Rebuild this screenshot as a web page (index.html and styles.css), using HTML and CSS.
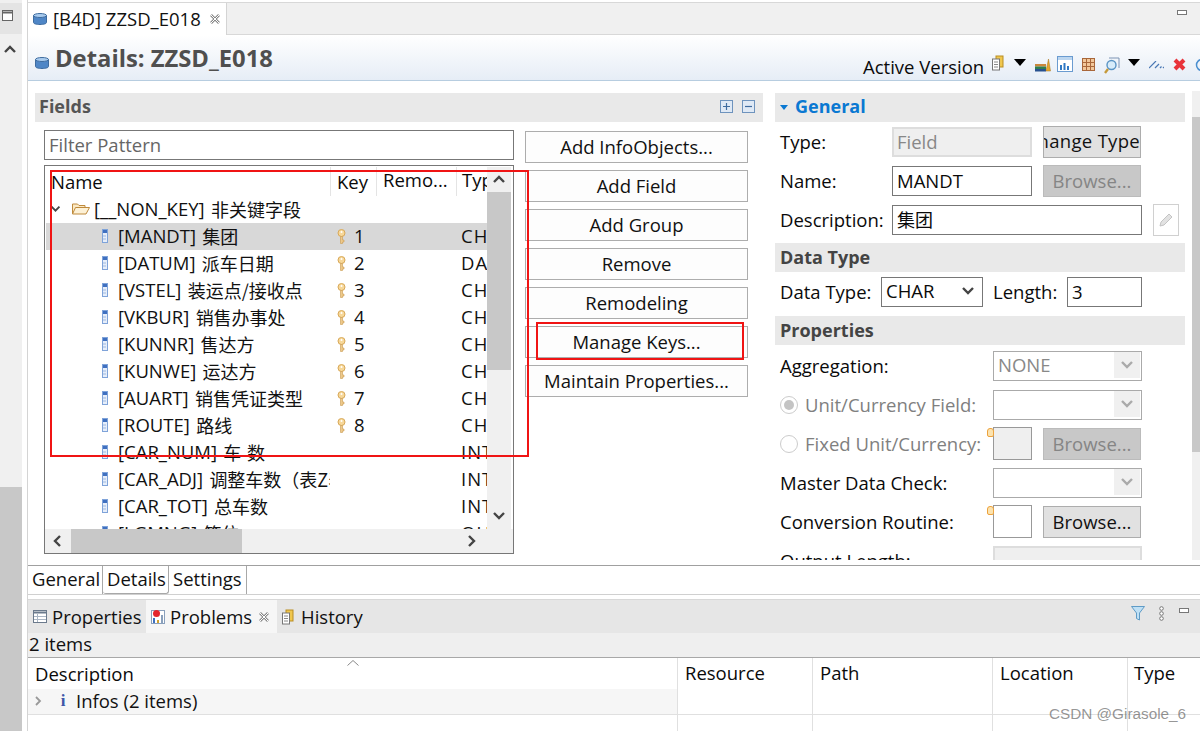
FILE: index.html
```html
<!DOCTYPE html>
<html lang="zh">
<head>
<meta charset="utf-8">
<title>ZZSD_E018</title>
<link rel="stylesheet" href="styles.css">
</head>
<body>
<svg class="defs" width="0" height="0">
  <symbol id="db" viewBox="0 0 14 12"><path d="M.5 2.5v7c0 1.2 2.8 2 6.5 2s6.500-.8 6.500-2v-7z" fill="#4f86c6" stroke="#3f6c9f"/><ellipse cx="7" cy="2.500" rx="6.500" ry="2" fill="#a9cbee" stroke="#3f6c9f"/></symbol>
  <symbol id="field" viewBox="0 0 6 14"><rect x=".5" y=".5" width="5" height="13" fill="#e6eefa" stroke="#7fa3d9"/><path d="M1 1h4v3H1z" fill="#3f70c0"/><path d="M1 7h3M1 10h3" stroke="#9db8e0"/></symbol>
  <symbol id="key" viewBox="0 0 9 15"><circle cx="4.500" cy="4" r="3.500" fill="#f7d89a" stroke="#d8a858"/><circle cx="4.500" cy="3" r="1" fill="#fff"/><path d="M3.500 7.500v7h2v-1.500h1.500v-2H5.500V7.500z" fill="#eec98a" stroke="#c99a50" stroke-width=".6"/></symbol>
  <symbol id="chev" viewBox="0 0 14 10"><path d="M2 2l5 5 5-5" fill="none" stroke="currentColor" stroke-width="2.400"/></symbol>
  <symbol id="hist" viewBox="0 0 12 16"><rect x="4" y="1" width="7" height="11" fill="#f0c74e" stroke="#b98d22"/><rect x=".5" y="4" width="7" height="11" fill="#fff" stroke="#777"/><path d="M2 7h4M2 9.500h4M2 12h4" stroke="#888"/></symbol>
  <symbol id="close" viewBox="0 0 10 10"><path d="M1 1l8 8M9 1L1 9" stroke="#888" stroke-width="2.600"/><path d="M1 1l8 8M9 1L1 9" stroke="#fff" stroke-width="1"/></symbol>
  <symbol id="min" viewBox="0 0 10 5"><rect x=".5" y=".5" width="9" height="4" fill="#fff" stroke="#777"/></symbol>
</svg>

<div class="page">
  <aside class="leftbar">
    <div class="lb-top"><svg class="lb-win" width="11" height="11" viewBox="0 0 11 11"><rect x=".5" y=".5" width="10" height="10" fill="#fff" stroke="#666"/><path d="M1 2.500h9" stroke="#666" stroke-width="2"/></svg></div>
    <div class="lb-mid"><svg class="lb-up" width="14" height="10"><use href="#chev" transform="matrix(1 0 0 -1 0 9)"/></svg></div>
    <div class="lb-thumb"></div>
  </aside>

  <main class="main">
    <div class="editor-tabs">
      <div class="editor-tab"><svg class="i-db" width="14" height="12"><use href="#db"/></svg><span>[B4D] ZZSD_E018</span><svg class="i-close" width="10" height="10"><use href="#close"/></svg></div>
      <svg class="i-min top-min" width="10" height="5"><use href="#min"/></svg>
    </div>

    <header class="head">
      <div class="head-title"><svg class="i-db2" width="14" height="12"><use href="#db"/></svg><h1>Details: ZZSD_E018</h1></div>
      <div class="head-tools">
        <span class="version">Active Version</span>
        <svg class="t t1" width="12" height="16"><use href="#hist"/></svg>
        <span class="drop"></span>
        <svg class="t t2" width="16" height="14" viewBox="0 0 16 14"><path d="M0 6h11v2.500H0z" fill="#c9863a"/><path d="M0 8.500h11V11H0z" fill="#2e7d4f"/><path d="M0 11h11v2.500H0z" fill="#27508f"/><path d="M11 13l2.500-12 2 12z" fill="#e5a52c" stroke="#a5741c" stroke-width=".5"/></svg>
        <svg class="t t3" width="16" height="16" viewBox="0 0 16 16"><rect x=".5" y=".5" width="15" height="15" fill="#fff" stroke="#6a9bd0"/><path d="M1 1h14v3H1z" fill="#bcd6f0"/><path d="M3 14V9h2v5zM6.500 14V7h2v7zM10 14v-4h2v4z" fill="#2f78c4"/></svg>
        <svg class="t t4" width="13" height="13" viewBox="0 0 13 13"><rect x=".5" y=".5" width="12" height="12" fill="#f2c79a" stroke="#a9673a"/><path d="M.5 4.500h12M.5 8.500h12M4.500.5v12M8.500.5v12" stroke="#a9673a"/></svg>
        <svg class="t t5" width="16" height="17" viewBox="0 0 16 17"><path d="M5 1h10v10" fill="none" stroke="#7c94b4"/><circle cx="7.500" cy="8" r="4.500" fill="#d7ecfa" stroke="#5a94c4" stroke-width="1.400"/><path d="M4 12l-3 4" stroke="#c59a3a" stroke-width="2.400"/></svg>
        <span class="drop d2"></span>
        <svg class="t t6" width="15" height="8" viewBox="0 0 15 8"><path d="M0 7l7-7M6 7l4-4M11 7l1.500-1.500M14 7l1-1" stroke="#4a78b4" stroke-width="1.200"/></svg>
        <svg class="t t7" width="13" height="13" viewBox="0 0 13 13"><path d="M2 2l9 9M11 2l-9 9" stroke="#e8333a" stroke-width="4"/></svg>
        <svg class="t t8" width="14" height="14" viewBox="0 0 14 14"><circle cx="7" cy="7" r="5.500" fill="none" stroke="#4a8fd0" stroke-width="1.500"/></svg>
      </div>
    </header>

    <div class="content">
      <section class="fields">
        <div class="sec-head fields-head">
          <span>Fields</span>
          <span class="sec-tools">
            <svg width="13" height="13" viewBox="0 0 13 13"><rect x=".5" y=".5" width="12" height="12" fill="#dfe9f5" stroke="#6e93bd"/><path d="M3 6.500h7M6.500 3v7" stroke="#3f6c9f" stroke-width="1.200"/></svg>
            <svg width="13" height="13" viewBox="0 0 13 13"><rect x=".5" y=".5" width="12" height="12" fill="#dfe9f5" stroke="#6e93bd"/><path d="M3 6.500h7" stroke="#3f6c9f" stroke-width="1.200"/></svg>
          </span>
        </div>
        <div class="fields-body">
          <div class="tree-col">
            <div class="filter">Filter Pattern</div>
            <div class="tree">
              <div class="tree-top">
                <div class="list">
                  <div class="list-head"><span class="c1">Name</span><span class="c2">Key</span><span class="c3">Remo...</span><span class="c4">Typ</span></div>
                  <div class="tr folder"><span class="c1"><svg class="twist" width="11" height="8"><use href="#chev"/></svg><svg class="i-folder" width="18" height="13" viewBox="0 0 18 13"><path d="M.5 12V2h5l1.500 1.500h6V6" fill="#fbe9c4" stroke="#bf8a3c"/><path d="M.5 12l3-6.500h14L14 12z" fill="#fdf1d6" stroke="#bf8a3c"/></svg>[__NON_KEY] <span class="zh">非关键字段</span></span></div>
                  <div class="tr selrow"><span class="c1"><svg class="i-f" width="6" height="14"><use href="#field"/></svg>[MANDT] <span class="zh">集团</span></span><span class="c2"><svg class="i-k" width="9" height="15"><use href="#key"/></svg>1</span><span class="c3"></span><span class="c4">CHAR</span></div>
                  <div class="tr"><span class="c1"><svg class="i-f" width="6" height="14"><use href="#field"/></svg>[DATUM] <span class="zh">派车日期</span></span><span class="c2"><svg class="i-k" width="9" height="15"><use href="#key"/></svg>2</span><span class="c3"></span><span class="c4">DATS</span></div>
                  <div class="tr"><span class="c1"><svg class="i-f" width="6" height="14"><use href="#field"/></svg>[VSTEL] <span class="zh">装运点/接收点</span></span><span class="c2"><svg class="i-k" width="9" height="15"><use href="#key"/></svg>3</span><span class="c3"></span><span class="c4">CHAR</span></div>
                  <div class="tr"><span class="c1"><svg class="i-f" width="6" height="14"><use href="#field"/></svg>[VKBUR] <span class="zh">销售办事处</span></span><span class="c2"><svg class="i-k" width="9" height="15"><use href="#key"/></svg>4</span><span class="c3"></span><span class="c4">CHAR</span></div>
                  <div class="tr"><span class="c1"><svg class="i-f" width="6" height="14"><use href="#field"/></svg>[KUNNR] <span class="zh">售达方</span></span><span class="c2"><svg class="i-k" width="9" height="15"><use href="#key"/></svg>5</span><span class="c3"></span><span class="c4">CHAR</span></div>
                  <div class="tr"><span class="c1"><svg class="i-f" width="6" height="14"><use href="#field"/></svg>[KUNWE] <span class="zh">运达方</span></span><span class="c2"><svg class="i-k" width="9" height="15"><use href="#key"/></svg>6</span><span class="c3"></span><span class="c4">CHAR</span></div>
                  <div class="tr"><span class="c1"><svg class="i-f" width="6" height="14"><use href="#field"/></svg>[AUART] <span class="zh">销售凭证类型</span></span><span class="c2"><svg class="i-k" width="9" height="15"><use href="#key"/></svg>7</span><span class="c3"></span><span class="c4">CHAR</span></div>
                  <div class="tr"><span class="c1"><svg class="i-f" width="6" height="14"><use href="#field"/></svg>[ROUTE] <span class="zh">路线</span></span><span class="c2"><svg class="i-k" width="9" height="15"><use href="#key"/></svg>8</span><span class="c3"></span><span class="c4">CHAR</span></div>
                  <div class="tr"><span class="c1"><svg class="i-f" width="6" height="14"><use href="#field"/></svg>[CAR_NUM] <span class="zh">车 数</span></span><span class="c2"></span><span class="c3"></span><span class="c4">INT4</span></div>
                  <div class="tr"><span class="c1"><svg class="i-f" width="6" height="14"><use href="#field"/></svg>[CAR_ADJ] <span class="zh">调整车数（表Z表）</span></span><span class="c2"></span><span class="c3"></span><span class="c4">INT4</span></div>
                  <div class="tr"><span class="c1"><svg class="i-f" width="6" height="14"><use href="#field"/></svg>[CAR_TOT] <span class="zh">总车数</span></span><span class="c2"></span><span class="c3"></span><span class="c4">INT4</span></div>
                  <div class="tr"><span class="c1"><svg class="i-f" width="6" height="14"><use href="#field"/></svg>[LGMNG] <span class="zh">箱位</span></span><span class="c2"></span><span class="c3"></span><span class="c4">QUAN</span></div>
                </div>
                <div class="vscroll">
                  <div class="vs-up"><svg width="14" height="10"><use href="#chev" transform="matrix(1 0 0 -1 0 9)"/></svg></div>
                  <div class="vs-thumb"></div>
                  <div class="vs-rest"><svg width="14" height="10"><use href="#chev"/></svg></div>
                </div>
              </div>
              <div class="hscroll">
                <svg class="hs-l" width="10" height="14" viewBox="0 0 10 14"><path d="M8 2L3 7l5 5" fill="none" stroke="#444" stroke-width="2.400"/></svg>
                <div class="hs-thumb"></div>
                <svg class="hs-r" width="10" height="14" viewBox="0 0 10 14"><path d="M2 2l5 5-5 5" fill="none" stroke="#444" stroke-width="2.400"/></svg>
              </div>
            </div>
          </div>
          <div class="btn-col">
            <div class="btn">Add InfoObjects...</div>
            <div class="btn">Add Field</div>
            <div class="btn">Add Group</div>
            <div class="btn">Remove</div>
            <div class="btn">Remodeling</div>
            <div class="btn">Manage Keys...</div>
            <div class="btn">Maintain Properties...</div>
          </div>
        </div>
      </section>

      <section class="general">
        <div class="sec-head gen-head"><span class="tri"></span>General</div>
        <div class="row"><label class="l1">Type:</label><div class="inp w140 dis">Field</div><div class="pbtn clip"><span>Change Type</span></div></div>
        <div class="row"><label class="l1">Name:</label><div class="inp w140">MANDT</div><div class="pbtn off">Browse...</div></div>
        <div class="row"><label class="l1">Description:</label><div class="inp w250 zh">集团</div><div class="pencil"><svg width="16" height="16" viewBox="0 0 16 16"><path d="M2 14l1-4 8-8 3 3-8 8z" fill="#e2e2e2" stroke="#c4c4c4"/></svg></div></div>

        <div class="sec-head sub">Data Type</div>
        <div class="row"><label class="l0">Data Type:</label><div class="sel w102 on">CHAR<i><svg width="14" height="10"><use href="#chev"/></svg></i></div><label class="l2">Length:</label><div class="inp w75">3</div></div>

        <div class="sec-head sub sub2">Properties</div>
        <div class="row"><label class="l3">Aggregation:</label><div class="sel w149 gray">NONE<i><svg width="14" height="10"><use href="#chev"/></svg></i></div></div>
        <div class="row"><span class="radio on"></span><label class="l4 mute">Unit/Currency Field:</label><div class="sel w149"><i><svg width="14" height="10"><use href="#chev"/></svg></i></div></div>
        <div class="row"><span class="radio"></span><label class="l4 mute">Fixed Unit/Currency:</label><div class="inp w39 dis2 bulb"></div><div class="pbtn off">Browse...</div></div>
        <div class="row"><label class="l3">Master Data Check:</label><div class="sel w149"><i><svg width="14" height="10"><use href="#chev"/></svg></i></div></div>
        <div class="row"><label class="l3">Conversion Routine:</label><div class="inp w39 tall bulb"></div><div class="pbtn">Browse...</div></div>
        <div class="row"><label class="l3">Output Length:</label><div class="inp w149 dis out"></div></div>
      </section>

      <div class="side-scroll"><div class="ss-up"></div><div class="ss-thumb"></div><div class="ss-rest"></div></div>
    </div>

    <nav class="page-tabs">
      <span class="ptab">General</span><span class="ptab act">Details</span><span class="ptab">Settings</span>
    </nav>

    <section class="bottom">
      <div class="view-tabs">
        <div class="vtab"><svg width="14" height="13" viewBox="0 0 14 13"><rect x=".5" y=".5" width="13" height="12" fill="#fff" stroke="#6b7a8c"/><path d="M1 2.500h12" stroke="#6b7a8c" stroke-width="2"/><path d="M1 6.500h12M1 9.500h12M4.500 4v8" stroke="#aab6c4"/></svg>Properties</div>
        <div class="vtab act"><svg width="15" height="15" viewBox="0 0 15 15"><rect x=".5" y="1.500" width="13" height="13" fill="#fff" stroke="#8aa0bc"/><circle cx="5.500" cy="4.500" r="3.500" fill="#e4252d"/><path d="M2 14V9h2v5z" fill="#3f70c0"/><path d="M6 14v-3h2v3z" fill="#d0a030"/><path d="M10 14V6h2v8z" fill="#8aa0bc"/></svg>Problems<svg class="i-close" width="10" height="10"><use href="#close"/></svg></div>
        <div class="vtab hist"><svg width="12" height="16"><use href="#hist"/></svg>History</div>
        <div class="view-tools">
          <svg class="vt-filter" width="14" height="15" viewBox="0 0 14 15"><path d="M.5.500h13L8.500 7v7l-3-1.500V7z" fill="#bfe0f5" stroke="#5f9bc6"/></svg>
          <svg class="vt-dots" width="5" height="15" viewBox="0 0 5 15"><g fill="#fff" stroke="#777"><circle cx="2.500" cy="2.500" r="1.800"/><circle cx="2.500" cy="7.500" r="1.800"/><circle cx="2.500" cy="12.500" r="1.800"/></g></svg>
          <svg class="vt-min" width="10" height="5"><use href="#min"/></svg>
        </div>
      </div>
      <div class="count">2 items</div>
      <div class="tbl-head">
        <span class="h1">Description<svg class="sort" width="12" height="6" viewBox="0 0 12 6"><path d="M.5 5.500L6 .5l5.500 5" fill="none" stroke="#888"/></svg></span><span class="h2">Resource</span><span class="h3">Path</span><span class="h4">Location</span><span class="h5">Type</span>
      </div>
      <div class="tbl-row">
        <span class="h1 info"><svg width="8" height="10" viewBox="0 0 8 10"><path d="M1 1l4 4-4 4" fill="none" stroke="#999" stroke-width="1.800"/></svg><b class="i-i">i</b>Infos (2 items)</span><span class="h2"></span><span class="h3"></span><span class="h4"></span><span class="h5"></span>
      </div>
      <div class="tbl-row empty"><span class="h1"></span><span class="h2"></span><span class="h3"></span><span class="h4"></span><span class="h5"></span></div>
    </section>
  </main>
</div>

<div class="red r1"></div>
<div class="red r2"></div>
<div class="watermark">CSDN @Girasole_6</div>
</body>
</html>
```
FILE: styles.css
```css
* { box-sizing: border-box; }
html, body { margin: 0; padding: 0; }
body { width: 1200px; height: 731px; overflow: hidden; background: #fff; color: #0a0a0a; position: relative;
  font-family: "Open Sans", "Noto Sans CJK SC", sans-serif; font-size: 18.5px; line-height: 24px; }
.defs { position: absolute; }
.zh { font-size: 18px; font-family: "Noto Sans CJK SC", sans-serif; }
svg { flex: none; display: block; }
label { white-space: nowrap; }
.page { display: flex; width: 1200px; height: 731px; }

/* left trim */
.leftbar { width: 22px; margin-right: 5px; background: #f0f0f0; display: flex; flex-direction: column; padding-top: 3px; }
.lb-top { height: 31px; background: #e4e4e4; padding: 7px 0 0 2px; }
.lb-mid { flex: 1; padding: 11px 0 0 3px; color: #444; }
.lb-thumb { height: 244px; background: #c8c8c8; }

/* main */
.main { width: 1173px; border-left: 1px solid #d4d4d4; display: flex; flex-direction: column; height: 731px; border-top: 0; }
.editor-tabs { height: 33px; margin-top: 2px; border-top: 1px solid #d8d8d8; border-bottom: 1px solid #d8d8d8; background: #f0f0f0; display: flex; align-items: flex-start; justify-content: space-between; flex: none; }
.editor-tab { width: 199px; height: 32px; background: #fff; border-right: 1px solid #d4d4d4; display: flex; align-items: center; padding: 0 0 0 5px; color: #111; }
.i-db { margin-right: 6px; }
.i-close { margin-left: 9px; }
.top-min { margin: 7px 13px 0 0; }

.head { height: 46px; flex: none; background: linear-gradient(#fff, #e6edf6); border-bottom: 1px solid #b7cde0; display: flex; justify-content: space-between; position: relative; }
.head-title { display: flex; align-items: center; padding-left: 7px; }
.i-db2 { margin: 10px 6px 0 0; }
h1 { margin: 1px 0 0; font-size: 23.800px; line-height: 32px; font-weight: 700; color: #4f4f4f; }
.head-tools { display: flex; align-items: flex-end; padding: 0 0 1px 0; width: 337px; flex: none; }
.version { line-height: 24px; color: #0a0a0a; width: 129px; flex: none; white-space: nowrap; }
.t { margin-bottom: 7px; }
.t1 { margin-bottom: 8px; margin-right: 10px; }
.drop { width: 0; height: 0; flex: none; border: 6px solid transparent; border-top: 7px solid #000; border-bottom: 0; margin: 0 9px 13px 0; }
.d2 { margin-left: 8px; margin-right: 9px; }
.t3 { margin-left: 6px; }
.t4 { margin-left: 9px; margin-bottom: 8px; }
.t5 { margin-left: 9px; margin-bottom: 5px; }
.t6 { margin-bottom: 10px; }
.t7 { margin-left: 9px; margin-bottom: 8px; }
.t8 { margin-left: 9px; margin-bottom: 7px; }

.content { height: 484px; flex: none; display: flex; align-items: flex-start; padding: 12px 0 0 7px; overflow: hidden; }
.sec-head { background: #e9e9e9; font-weight: 700; color: #555; height: 29px; line-height: 27px; display: flex; align-items: center; padding: 0 0 1px 4px; font-size: 18px; }
.fields { width: 728px; flex: none; }
.fields-head { justify-content: space-between; padding-bottom: 3px; }
.sec-tools { display: flex; gap: 9px; padding-right: 8px; }
.fields-body { display: flex; padding: 8px 0 0 9px; gap: 11px; }
.tree-col { width: 470px; flex: none; }
.filter { height: 30px; border: 1px solid #777; color: #666; padding: 1px 4px; line-height: 26px; }
.tree { margin-top: 5px; height: 389px; border: 1px solid #777; display: flex; flex-direction: column; padding: 1px 1px 0; }
.tree-top { flex: 1; display: flex; min-height: 0; }
.list { width: 441px; height: 362px; overflow: hidden; }
.list-head, .tr { display: flex; height: 27px; }
.list-head { height: 29px; align-items: flex-start; }
.c1 { width: 284px; display: flex; align-items: center; white-space: pre; overflow: hidden; flex: none; padding-left: 5px; }
.c2 { width: 46px; flex: none; display: flex; align-items: center; padding-left: 6px; }
.c3 { width: 80px; flex: none; padding-left: 6px; white-space: nowrap; }
.c4 { width: 31px; flex: none; overflow: hidden; padding-left: 5px; white-space: nowrap; }
.tr .c4 { letter-spacing: 1px; }
.list-head span { line-height: 25px; height: 29px; }
.list-head span + span { border-left: 1px solid #e4e4e4; }
.tr { align-items: center; color: #111; padding-bottom: 2px; }
.tr.selrow { background: #d8d8d8; }
.tr .c1 { padding-left: 56px; word-spacing: 1.500px; }
.tr.folder .c1 { padding-left: 4px; }
.twist { margin-right: 11px; color: #444; }
.i-folder { margin-right: 4px; }
.i-f { margin-right: 10px; }
.tr .c2 { padding-left: 7px; }
.i-k { margin-right: 8px; margin-top: 1px; }
.vscroll { width: 24px; display: flex; flex-direction: column; background: #f0f0f0; color: #444; }
.vs-up { height: 25px; display: flex; align-items: center; justify-content: center; }
.vs-thumb { height: 178px; background: #c8c8c8; }
.vs-rest { flex: 1; display: flex; align-items: flex-end; justify-content: center; padding-bottom: 8px; }
.hscroll { height: 24px; background: #f0f0f0; display: flex; align-items: center; position: relative; flex: none; margin: 0 -1px; }
.hs-l { margin-left: 7px; }
.hs-thumb { width: 171px; height: 24px; background: #c8c8c8; margin-left: 9px; }
.hs-r { margin-left: 225px; }
.btn-col { width: 223px; flex: none; display: flex; flex-direction: column; gap: 7px; padding-top: 1px; }
.btn { height: 32px; border: 1px solid #adadad; background: #fdfdfd; display: flex; align-items: center; justify-content: center; white-space: nowrap; padding-bottom: 1px; color: #111; }

/* general */
.general { width: 410px; margin-left: 12px; flex: none; height: 467px; overflow: hidden; }
.gen-head { color: #0a78d2; padding: 0 0 3px 5px; }
.tri { width: 0; height: 0; border: 4px solid transparent; border-top: 5px solid #0a78d2; border-bottom: 0; margin: 2px 7px 0 0; }
.row { display: flex; align-items: center; height: 39px; padding-left: 5px; flex: none; }
.sub { margin-top: 4px; color: #444; padding-left: 5px; }
.sub2 { margin-top: 5px; margin-bottom: 1px; }
.l1 { width: 112px; }
.l0 { width: 101px; }
.l2 { margin-left: 10px; width: 74px; }
.l3 { width: 213px; }
.l4 { width: 188px; }
.mute { color: #808080; }
.radio { width: 18px; height: 18px; border: 1px solid #ccc; border-radius: 50%; background: #fff; margin-right: 7px; flex: none; display: flex; align-items: center; justify-content: center; }
.radio.on::after { content: ""; width: 10px; height: 10px; border-radius: 50%; background: #c4c4c4; }
.inp { height: 30px; border: 1px solid #777; padding: 0 4px; line-height: 27px; background: #fff; flex: none; position: relative; }
.inp.dis { background: #efefef; border: 2px solid #ddd; color: #888; padding: 0 3px; line-height: 26px; }
.inp.dis2 { background: #efefef; border: 1px solid #999; height: 33px; }
.inp.tall { height: 33px; border-color: #999; }
.inp.out { height: 33px; margin-top: 4px; }
.bulb::before { content: ""; position: absolute; left: -7px; top: 0; width: 5px; height: 7px; border-radius: 3px 3px 2px 2px; border: 1px solid #eda23c; background: #fbe3b0; }
.w140 { width: 140px; }
.w250 { width: 250px; }
.w75 { width: 75px; }
.w39 { width: 39px; }
.w149 { width: 149px; }
.w102 { width: 102px; }
.pbtn { width: 98px; height: 32px; margin-left: 11px; flex: none; border: 1px solid #adadad; background: #e1e1e1; display: flex; align-items: center; justify-content: center; white-space: nowrap; overflow: hidden; color: #111; }
.pbtn.off { background: #c8c8c8; color: #858585; border-color: #bbb; }
.pbtn.clip { justify-content: flex-end; letter-spacing: .3px; padding-bottom: 1px; }
.pencil { width: 26px; height: 32px; margin-left: 11px; border: 1px solid #d0d0d0; display: flex; align-items: center; justify-content: center; }
.sel { height: 30px; border: 1px solid #aaa; flex: none; display: flex; align-items: center; justify-content: space-between; padding: 0 1px 1px 4px; }
.sel i { width: 26px; height: 26px; background: #f0f0f0; color: #aaa; display: flex; align-items: center; justify-content: center; margin-left: auto; }
.sel.on { border-color: #777; }
.sel.on i { background: #fff; color: #444; }
.sel.gray { color: #888; }

.side-scroll { width: 8px; margin-left: 7px; flex: none; display: flex; flex-direction: column; height: 469px; background: #f0f0f0; margin-top: -2px; }
.ss-up { height: 26px; }
.ss-thumb { height: 335px; background: #c8c8c8; }

/* page tabs */
.page-tabs { height: 30px; flex: none; border-top: 1px solid #a0a0a0; border-bottom: 1px solid #d0d0d0; display: flex; background: #fff; }
.ptab { padding: 0 0 3px 4px; line-height: 25px; border-right: 1px solid #a8a8a8; height: 28px; color: #111; }
.ptab:nth-child(1) { width: 75px; }
.ptab:nth-child(2) { width: 66px; }
.ptab:nth-child(3) { width: 78px; }
.ptab.act { border-bottom: 1px solid #a8a8a8; border-radius: 0 0 3px 3px; }

/* bottom panel */
.bottom { flex: 1; display: flex; flex-direction: column; min-height: 0; }
.view-tabs { height: 34px; margin-top: 4px; flex: none; background: #e6e6e6; border-top: 1px solid #d8d8d8; display: flex; align-items: center; }
.vtab { height: 33px; display: flex; align-items: center; padding: 0 7px 0 5px; gap: 5px; color: #111; }
.vtab:first-child { width: 118px; }
.vtab.act { background: #f6f6f6; width: 131px; gap: 4px; }
.vtab.hist { gap: 7px; }
.vtab .i-close { margin-left: 3px; }
.view-tools { margin-left: auto; display: flex; align-items: center; padding-right: 11px; }
.vt-filter { margin: -6px 14px 0 0; }
.vt-dots { margin: -6px 15px 0 0; }
.vt-min { margin-top: -12px; }
.count { height: 25px; background: #efefef; border-bottom: 1px solid #a8a8a8; flex: none; line-height: 22px; padding-left: 1px; color: #111; }
.tbl-head, .tbl-row { display: flex; flex: none; }
.tbl-head { height: 31px; line-height: 29px; }
.tbl-row { height: 26px; border-bottom: 1px solid #e0e0e0; line-height: 22px; }
.h1 { width: 649px; padding-left: 7px; position: relative; flex: none; display: flex; align-items: center; }
.tbl-row .h1 { padding-bottom: 2px; }
.h2, .h3, .h4, .h5 { flex: none; border-left: 1px solid #e0e0e0; padding-left: 7px; }
.h2 { width: 135px; }
.h3 { width: 180px; }
.h4 { width: 135px; }
.h5 { width: 73px; padding-left: 6px; }
.sort { position: absolute; left: 319px; top: 2px; }
.tbl-row .h1 { background: #f6f6f6; }
.tbl-row.empty .h1 { background: #fff; }
.info { color: #111; }
.i-i { color: #3f57a8; font-family: "Liberation Serif", serif; font-size: 17px; width: 10px; margin: 0 8px 0 15px; text-align: center; }

/* annotations on top of the screenshot */
.red { position: absolute; border: 2px solid #f01414; }
.r1 { left: 50px; top: 170px; width: 479px; height: 287px; }
.r2 { left: 536px; top: 322px; width: 208px; height: 38px; }
.watermark { position: absolute; left: 1049px; top: 704px; font-family: "Liberation Sans", sans-serif; font-size: 15.300px; line-height: 20px; color: rgba(90, 90, 90, .65); white-space: nowrap; }
```
